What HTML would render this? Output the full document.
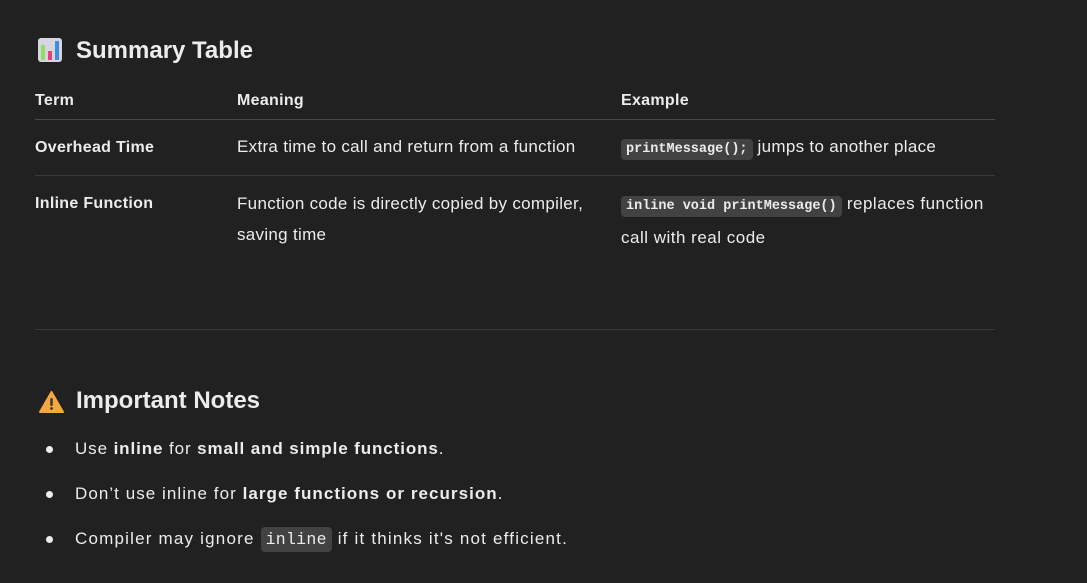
<!DOCTYPE html>
<html><head><style>
body{margin:0;background:#212121;width:1087px;height:583px;overflow:hidden;font-family:"Liberation Sans",sans-serif;color:#ececec;position:relative}
.a{position:absolute;white-space:nowrap;font-size:17px;line-height:20px;letter-spacing:0.3px}
.a b{font-size:16px}
.t b{font-size:17px}
b{font-weight:bold}
code{font-family:"Liberation Mono",monospace;font-size:13.5px;background:#424242;border-radius:4px;padding:3px 5px;font-weight:bold;color:#ececec;letter-spacing:0}
.ln{position:absolute;left:35px;width:960px;height:1px;background:#3a3a3a}
h{position:absolute;font-size:24px;font-weight:bold;line-height:28px;white-space:nowrap}
.dot{position:absolute;left:46px;width:7px;height:7px;border-radius:50%;background:#ececec}
.bl{letter-spacing:0.8px}
</style></head><body>
<svg style="position:absolute;left:38px;top:38px" width="24" height="24" viewBox="0 0 24 24">
<rect x="0" y="0" width="24" height="24" rx="3" fill="#d8d4e0"/>
<rect x="3" y="7" width="4" height="15" fill="#8fe060"/>
<rect x="10" y="13" width="4" height="9" fill="#e8407a"/>
<rect x="17" y="3" width="4" height="19" fill="#3a8ee8"/>
</svg>
<h style="left:76px;top:37px">Summary Table</h>
<div class="a" style="left:35px;top:90px"><b>Term</b></div>
<div class="a" style="left:237px;top:90px"><b>Meaning</b></div>
<div class="a" style="left:621px;top:90px"><b>Example</b></div>
<div class="ln" style="top:119px;background:#4a4a4a"></div>
<div class="a" style="left:35px;top:137px"><b>Overhead Time</b></div>
<div class="a" style="left:237px;top:137px">Extra time to call and return from a function</div>
<div class="a" style="left:621px;top:137px"><code>printMessage();</code> jumps to another place</div>
<div class="ln" style="top:175px"></div>
<div class="a" style="left:35px;top:193px"><b>Inline Function</b></div>
<div class="a" style="left:237px;top:188px;line-height:31px">Function code is directly copied by compiler,<br>saving time</div>
<div class="a" style="left:621px;top:188px;line-height:31px;letter-spacing:0.5px"><code>inline void printMessage()</code> replaces function<br>call with real code</div>
<div class="ln" style="top:329px"></div>
<svg style="position:absolute;left:39px;top:391px" width="25" height="22" viewBox="0 0 25 22">
<path d="M12.5 1 L24 21 H1 Z" fill="#f5a742" stroke="#f5a742" stroke-linejoin="round" stroke-width="2"/>
<rect x="11.3" y="7" width="2.4" height="8" rx="1" fill="#333"/>
<circle cx="12.5" cy="17.5" r="1.4" fill="#333"/>
</svg>
<h style="left:76px;top:387px">Important Notes</h>
<div class="dot" style="top:446px"></div>
<div class="a t bl" style="left:75px;top:439px;letter-spacing:0.9px">Use <b>inline</b> for <b>small and simple functions</b>.</div>
<div class="dot" style="top:491px"></div>
<div class="a t bl" style="left:75px;top:484px;letter-spacing:1.05px">Don’t use inline for <b>large functions or recursion</b>.</div>
<div class="dot" style="top:536px"></div>
<div class="a t bl" style="left:75px;top:529px;letter-spacing:1.2px">Compiler may ignore <code style="font-weight:normal;font-size:16.5px;letter-spacing:0.3px">inline</code> if it thinks it's not efficient.</div>
</body></html>
